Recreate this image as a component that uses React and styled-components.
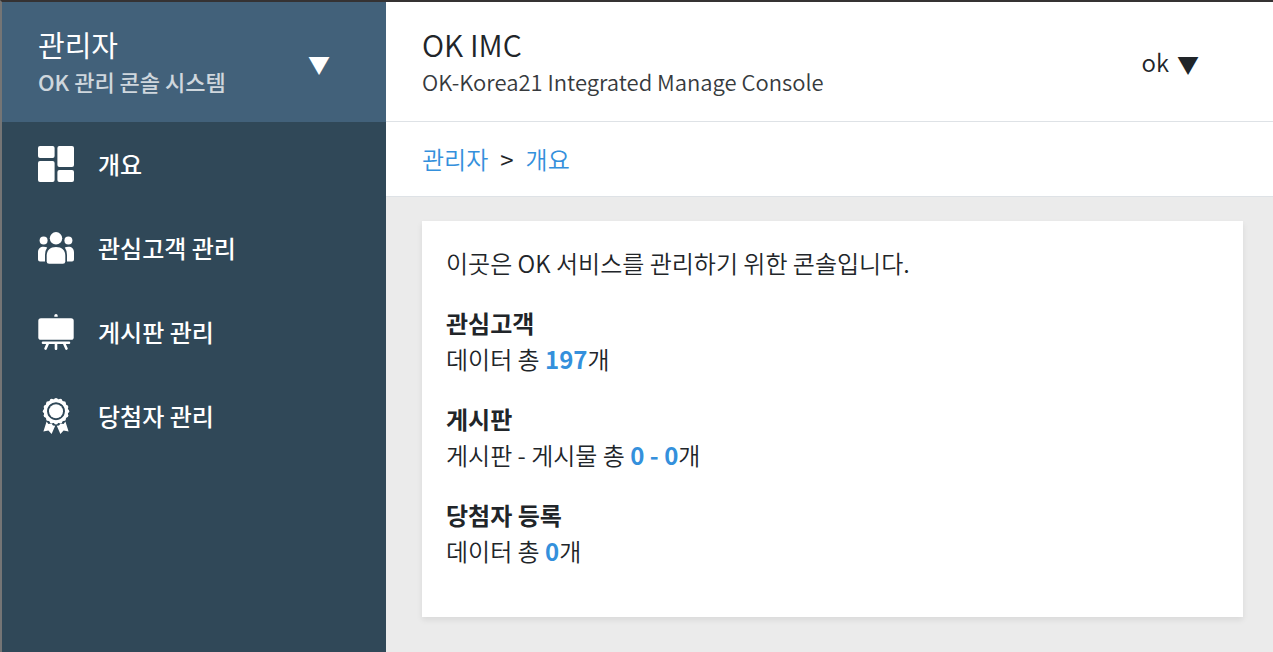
import React from 'react';
import styled, { createGlobalStyle } from 'styled-components';

const GlobalStyle = createGlobalStyle`
  *, *::before, *::after { box-sizing: border-box; }
  body {
    margin: 0;
    font-family: "Noto Sans CJK KR", "Noto Sans", sans-serif;
    font-size: 24px;
    font-weight: 350;
    line-height: 36px;
    color: #212529;
    background: #ebebeb;
  }
  h1, h2, h3, p, ul, ol { margin: 0; padding: 0; }
  ul, ol { list-style: none; }
  a { text-decoration: none; }
`;

const Page = styled.div`
  display: flex;
  min-height: 100vh;
  border-top: 2px solid #353233;
  border-left: 2px solid #757575;
`;

const Sidebar = styled.aside`
  flex: 0 0 384px;
  background: #304858;
  color: #fff;
  font-weight: 500;
`;

const SideHeader = styled.button`
  display: flex;
  align-items: center;
  justify-content: space-between;
  width: 100%;
  height: 120px;
  padding: 0 56px 0 36px;
  border: 0;
  background: #42617a;
  color: #fff;
  font: inherit;
  text-align: left;
  cursor: pointer;
`;

const TitleGroup = styled.div`
  display: flex;
  flex-direction: column;
  min-width: 0;
  padding-bottom: 4px;
`;

const Title = styled.span`
  font-size: ${(p) => p.$size}px;
  line-height: 42px;
  font-weight: ${(p) => p.$weight};
`;

const Subtitle = styled.span`
  font-size: 22px;
  line-height: 32px;
  font-weight: ${(p) => p.$weight};
  opacity: ${(p) => p.$opacity};
`;

const Caret = styled.span`
  padding-top: 2px;
  font-size: 22px;
`;

const NavLink = styled.a`
  display: flex;
  align-items: center;
  gap: 24px;
  padding: 24px 36px;
  color: #fff;
`;

const Icon = styled.svg`
  flex: none;
  width: 36px;
  height: 36px;
  fill: currentColor;
`;

const Main = styled.div`
  flex: 1;
  min-width: 0;
`;

const Header = styled.header`
  display: flex;
  align-items: center;
  justify-content: space-between;
  height: 120px;
  padding: 0 74px 0 36px;
  background: #fff;
  border-bottom: 1px solid #dee2e6;
`;

const UserMenu = styled.button`
  display: flex;
  align-items: center;
  gap: 8px;
  padding: 0;
  border: 0;
  background: none;
  color: inherit;
  font: inherit;
  cursor: pointer;
`;

const Breadcrumb = styled.nav`
  padding: 19px 36px;
  background: #fff;
  border-bottom: 1px solid #dee2e6;

  ol { display: flex; }
  li + li::before { content: ">"; padding: 0 12px; font-weight: 400; }
`;

const Crumb = styled.a`
  color: #3490dc;
`;

const Content = styled.main`
  padding: 24px 30px 24px 36px;
`;

const Card = styled.section`
  padding: 24px 24px 48px;
  display: flex;
  flex-direction: column;
  gap: 24px;
  background: #fff;
  box-shadow: 0 3px 6px rgba(0, 0, 0, 0.08);
`;

const StatTitle = styled.h2`
  font-size: 24px;
  font-weight: 700;
`;

const Count = styled.b`
  color: #3490dc;
  font-weight: 700;
`;

const OverviewIcon = () => (
  <Icon viewBox="0 0 36 36" aria-hidden="true">
    <rect x="0" y="0" width="16.6" height="12" rx="2" />
    <rect x="0" y="15" width="16.6" height="21" rx="2" />
    <rect x="19.4" y="0" width="16.6" height="21" rx="2" />
    <rect x="19.4" y="24" width="16.6" height="12" rx="2" />
  </Icon>
);

const PeopleIcon = () => (
  <Icon viewBox="0 0 36 36" aria-hidden="true">
    <circle cx="18" cy="8.3" r="6.2" />
    <circle cx="5.6" cy="10.6" r="4" />
    <circle cx="30.4" cy="10.6" r="4" />
    <path d="M8.7 25.5C8.7 20 12.3 16.9 18 16.9S27.3 20 27.3 25.5V31.4Q27.3 33.8 24.9 33.8H11.1Q8.7 33.8 8.7 31.4Z" />
    <path d="M0 22.5C0 18.6 2.2 16.8 5.6 16.8Q7.8 16.8 9.2 17.6Q7 20.7 7 25V31.5H2Q0 31.5 0 29.5Z" />
    <path d="M36 22.5C36 18.6 33.8 16.8 30.4 16.8Q28.2 16.8 26.8 17.6Q29 20.7 29 25V31.5H34Q36 31.5 36 29.5Z" />
  </Icon>
);

const BoardIcon = () => (
  <Icon viewBox="0 0 36 36" aria-hidden="true">
    <path d="M16.3 2.8V1.8Q16.3 0 18 0T19.7 1.8V2.8Z" />
    <rect x="0.3" y="4.2" width="35.4" height="21.6" rx="2.6" />
    <path
      d="M5 28.8H31M18 29V34.8M10 29L7.6 34.6M26 29L28.4 34.6"
      fill="none"
      stroke="currentColor"
      strokeWidth="2.6"
      strokeLinecap="round"
    />
  </Icon>
);

const scallops = Array.from({ length: 16 }, (_, i) => {
  const angle = (i * Math.PI) / 8;
  return { x: 18 + 11.2 * Math.cos(angle), y: 13.2 + 11.2 * Math.sin(angle) };
});

const AwardIcon = () => (
  <Icon viewBox="0 0 36 36" aria-hidden="true">
    <circle cx="18" cy="13.2" r="10.6" fill="none" stroke="currentColor" strokeWidth="3.2" />
    {scallops.map((s, i) => (
      <circle key={i} cx={s.x} cy={s.y} r="2" />
    ))}
    <circle cx="18" cy="13.2" r="7" />
    <path d="M8.6 23.4L10.4 26L13.4 25.6L15 27.6L17.2 27.8L13.6 36L10.4 32.4L5.4 33.4Z" />
    <path d="M27.4 23.4L25.6 26L22.6 25.6L21 27.6L18.8 27.8L22.4 36L25.6 32.4L30.6 33.4Z" />
  </Icon>
);

const navItems = [
  { label: '개요', Glyph: OverviewIcon },
  { label: '관심고객 관리', Glyph: PeopleIcon },
  { label: '게시판 관리', Glyph: BoardIcon },
  { label: '당첨자 관리', Glyph: AwardIcon },
];

const stats = [
  { title: '관심고객', label: '데이터 총', count: '197' },
  { title: '게시판', label: '게시판 - 게시물 총', count: '0 - 0' },
  { title: '당첨자 등록', label: '데이터 총', count: '0' },
];

export default function App() {
  return (
    <>
      <GlobalStyle />
      <Page>
        <Sidebar>
          <SideHeader type="button">
            <TitleGroup>
              <Title $size={29} $weight={400}>관리자</Title>
              <Subtitle $weight={500} $opacity={0.75}>OK 관리 콘솔 시스템</Subtitle>
            </TitleGroup>
            <Caret>▼</Caret>
          </SideHeader>
          <nav>
            <ul>
              {navItems.map(({ label, Glyph }) => (
                <li key={label}>
                  <NavLink href="#">
                    <Glyph />
                    {label}
                  </NavLink>
                </li>
              ))}
            </ul>
          </nav>
        </Sidebar>
        <Main>
          <Header>
            <TitleGroup as="h1">
              <Title $size={30} $weight={350}>OK IMC</Title>
              <Subtitle $weight={350} $opacity={0.9}>OK-Korea21 Integrated Manage Console</Subtitle>
            </TitleGroup>
            <UserMenu type="button">
              ok
              <Caret>▼</Caret>
            </UserMenu>
          </Header>
          <Breadcrumb>
            <ol>
              <li><Crumb href="#">관리자</Crumb></li>
              <li><Crumb href="#">개요</Crumb></li>
            </ol>
          </Breadcrumb>
          <Content>
            <Card>
              <p>이곳은 OK 서비스를 관리하기 위한 콘솔입니다.</p>
              {stats.map((s) => (
                <div key={s.title}>
                  <StatTitle>{s.title}</StatTitle>
                  <p>{s.label} <Count>{s.count}</Count>개</p>
                </div>
              ))}
            </Card>
          </Content>
        </Main>
      </Page>
    </>
  );
}
